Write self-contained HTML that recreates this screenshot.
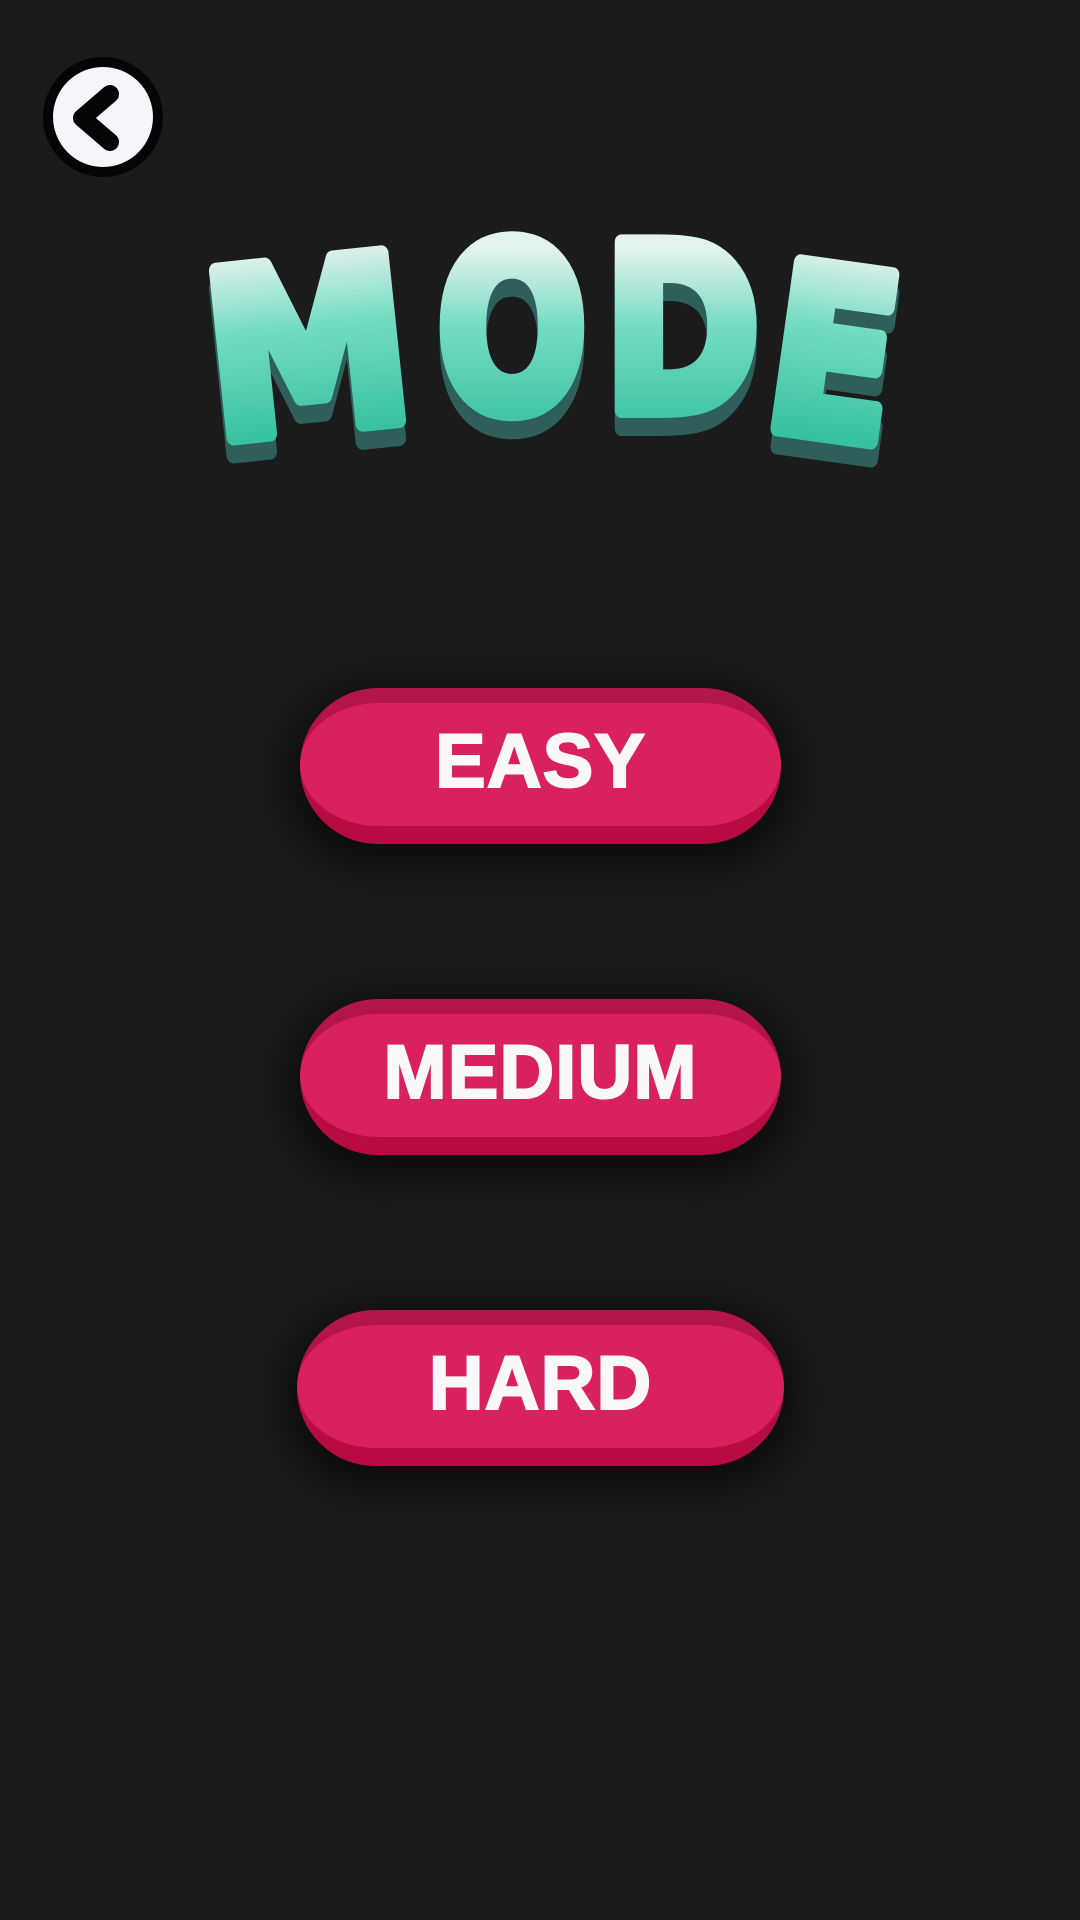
<!DOCTYPE html>
<html><head><meta charset="utf-8"><style>
html,body{margin:0;padding:0}
body{width:1080px;height:1920px;background:#1b1b1b;position:relative;overflow:hidden;font-family:"Liberation Sans",sans-serif}
.btn{position:absolute;left:300px;width:481px;height:156px;border-radius:78px;background:linear-gradient(#b3164a,#b50f45 50%,#b80a40);box-shadow:0 10px 40px 14px rgba(0,0,0,.55)}
.btn .in{position:absolute;left:0;right:0;top:15px;bottom:18px;border-radius:80px/62px;background:#d8215d;}
.btn span{position:absolute;left:0;right:0;top:0;height:156px;line-height:156px;text-align:center;color:#fbf8fa;font-weight:bold;font-size:76px;letter-spacing:1px;-webkit-text-stroke:2px #fbf8fa;transform:translateY(-4px)}
</style></head><body>
<svg width="1080" height="1920" style="position:absolute;left:0;top:0" viewBox="0 0 1080 1920">
<defs>
<linearGradient id="g2" gradientUnits="userSpaceOnUse" x1="0" y1="250" x2="0" y2="440"><stop offset="0" stop-color="#e2f2ee"/><stop offset=".4" stop-color="#74dcc2"/><stop offset="1" stop-color="#36c19f"/></linearGradient></defs>
<g font-family="DejaVu Sans, sans-serif" font-weight="bold" font-size="230" stroke-width="16" stroke-linejoin="round">
<g transform="translate(0,18)" fill="#2f5f5a" stroke="#2f5f5a">
<text x="206" y="430" textLength="204" lengthAdjust="spacingAndGlyphs" transform="rotate(-6 300 350)">M</text>
<text x="437" y="410" textLength="150" lengthAdjust="spacingAndGlyphs">O</text>
<text x="604" y="410" textLength="156" lengthAdjust="spacingAndGlyphs">D</text>
<text x="770" y="435" textLength="126" lengthAdjust="spacingAndGlyphs" transform="rotate(8 830 360)">E</text>
</g>
<g fill="url(#g2)" stroke="url(#g2)">
<text x="206" y="430" textLength="204" lengthAdjust="spacingAndGlyphs" transform="rotate(-6 300 350)">M</text>
<text x="437" y="410" textLength="150" lengthAdjust="spacingAndGlyphs">O</text>
<text x="604" y="410" textLength="156" lengthAdjust="spacingAndGlyphs">D</text>
<text x="770" y="435" textLength="126" lengthAdjust="spacingAndGlyphs" transform="rotate(8 830 360)">E</text>
</g></g>
<circle cx="103" cy="117" r="55" fill="#f6f5fb" stroke="#050505" stroke-width="10"/>
<path d="M110 94 L82 118 L110 142" fill="none" stroke="#050505" stroke-width="18" stroke-linecap="round" stroke-linejoin="round"/>
</svg>
<div class="btn" style="top:688px"><div class="in"></div><span>EASY</span></div>
<div class="btn" style="top:999px"><div class="in"></div><span>MEDIUM</span></div>
<div class="btn" style="top:1310px;left:297px;width:487px"><div class="in"></div><span>HARD</span></div>
</body></html>
